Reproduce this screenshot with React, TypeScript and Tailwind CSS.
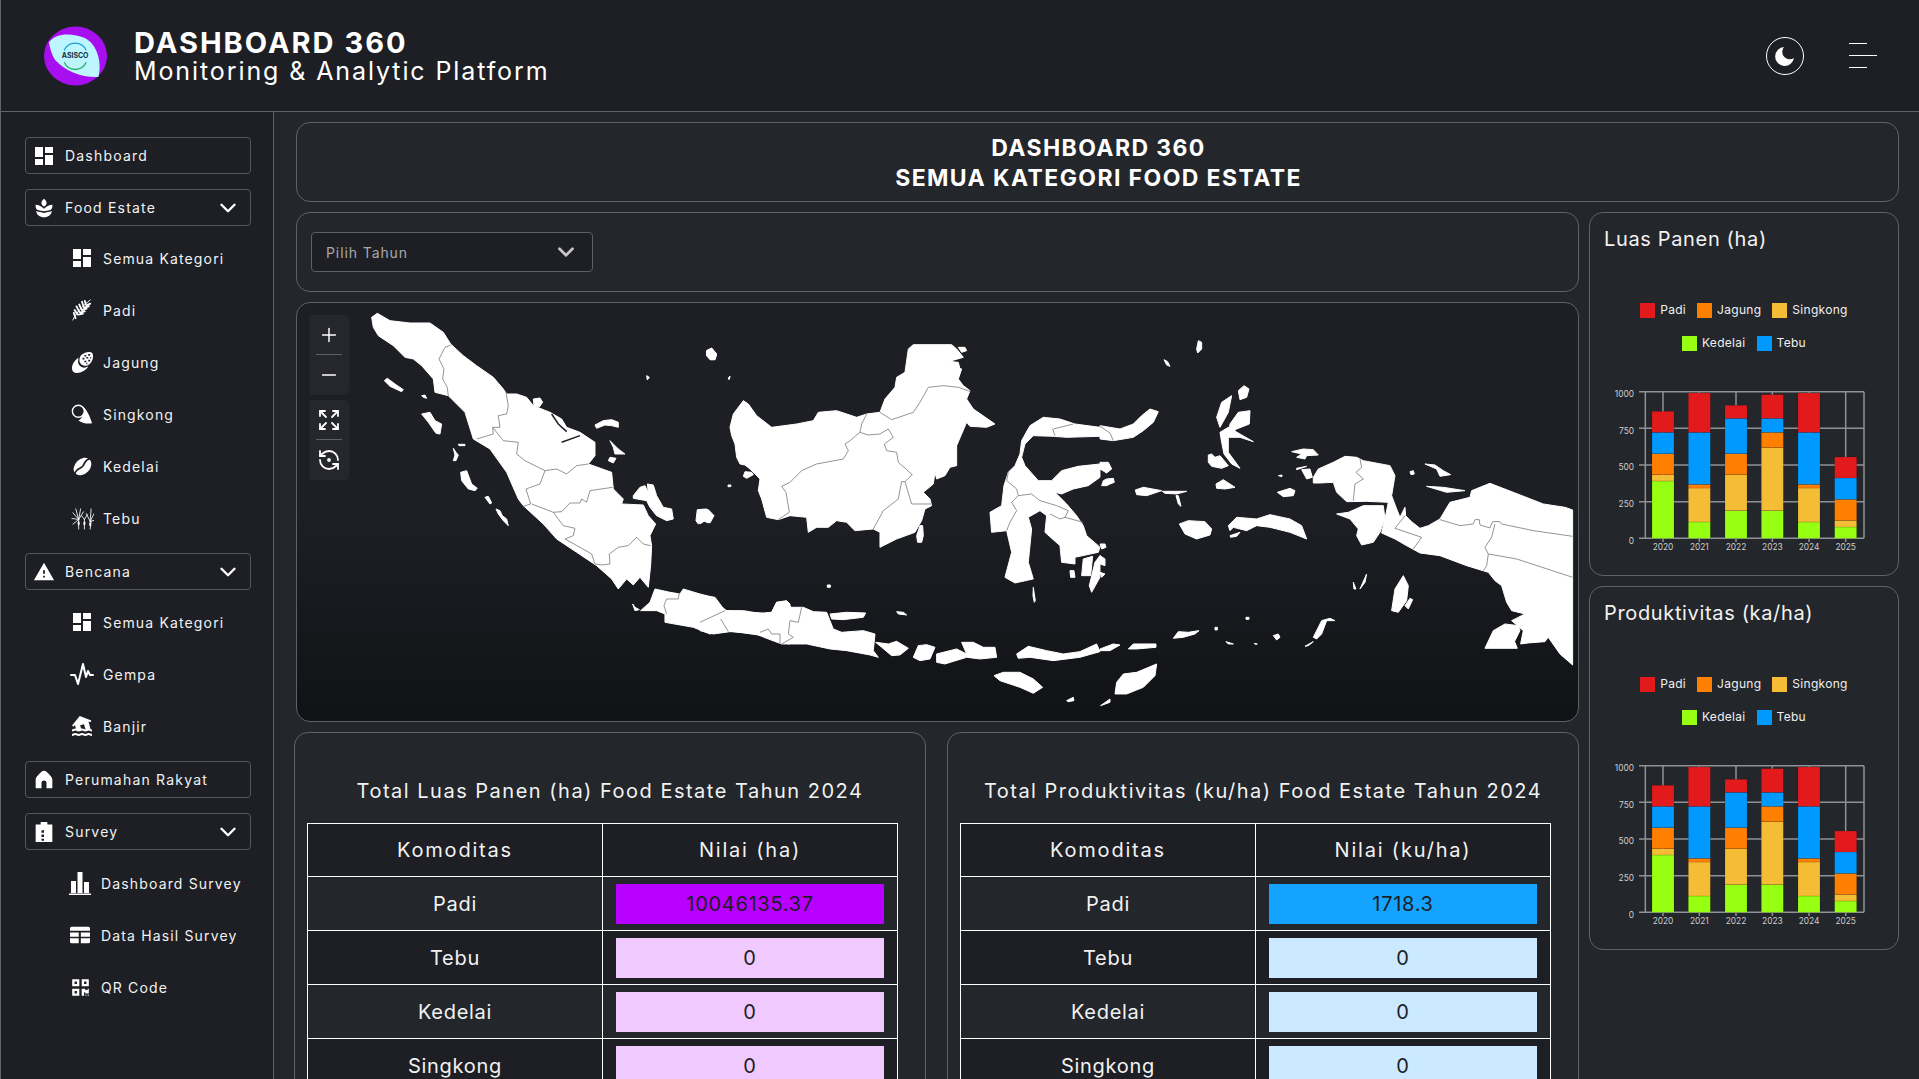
import React from 'react';
import { ChevronDown, Plus, Minus, Expand, RefreshCcwDot } from 'lucide-react';
import { MdWarning, MdFlood } from 'react-icons/md';
import { FaQrcode } from 'react-icons/fa';

/* sidebar icons */
const DashIcon = () => (
    <svg viewBox="3 3 18 18" className="w-[18px] h-[18px] fill-white"><path d="M3 13h8V3H3v10zm0 8h8v-6H3v6zm10 0h8V11h-8v10zm0-18v6h8V3h-8z" /></svg>
);
const SproutIcon = () => (
    <svg viewBox="0 0 24 24" className="w-[20px] h-[20px] fill-white">
        <path d="M12 1c2.400 2 3.400 4 3 6-.5 1.500-1.700 2.600-3 3.500-1.300-.9-2.500-2-3-3.500-.4-2 .6-4 3-6z" />
        <path d="M2 8c3.500.3 6.500 1.500 10 5 3.500-3.500 6.500-4.700 10-5 .5 3-.5 5-2.500 6.500-2.500 1-5.500 1-7.500 1.500-2-.5-5-.5-7.500-1.500C2.500 13 1.500 11 2 8z" />
        <path d="M2.500 15.500c3 1.500 6.500 1 9.500 2.500 3-1.500 6.500-1 9.500-2.500-.5 4.500-4.500 7.500-9.500 7.500s-9-3-9.500-7.500z" />
    </svg>
);
const PadiIcon = () => (
    <svg viewBox="0 0 24 24" className="w-[22px] h-[22px] stroke-white" fill="none" strokeWidth="1" strokeLinecap="round">
        <path d="M2 23C5 16 10 10 21 1" />
        <path d="M5 21l-2-6M7 17l-3-5M9 14l-3-6M11.500 11.500L9 6M14 9l-2-6M16.500 6.500L15 2M8 17l5-1M10 14.500l5-1M12 12l5-1.500M14.500 9.500l5-1.500M17 7l4-2" strokeWidth="2" />
    </svg>
);
const JagungIcon = () => (
    <svg viewBox="0 0 24 24" className="w-[23px] h-[23px]">
        <path d="M11 4c3-3 9-4 11-2s1 8-2 11c-2 2-5 3-7 2-3-1-5-4-4-7 .2-1.500 1-3 2-4z" fill="white" />
        <path d="M14 5h2M18 4h2M12 8h2M16 7h2M20 7h1M14 11h2M18 10h2M16 13h1" stroke="#1d1f24" strokeWidth="1.700" />
        <path d="M8 7c-4 2-7 7-7 11 0 3 2 5 5 5 5 0 10-3 12-7-3 2-6 2-8 0-3-2-3-6-2-9z" fill="white" />
    </svg>
);
const SingkongIcon = () => (
    <svg viewBox="0 0 24 24" className="w-[22px] h-[22px]">
        <path d="M10 3c5 .5 9 7 13 19-5 1-11 0-15-3 3-.5 8-7 2-16z" fill="white" />
        <circle cx="8" cy="9" r="6.500" fill="#1d1f24" stroke="white" strokeWidth="1.500" />
    </svg>
);
const KedelaiIcon = () => (
    <svg viewBox="0 0 24 24" className="w-[21px] h-[21px]">
        <ellipse cx="12" cy="12" rx="8.500" ry="11.500" transform="rotate(45 12 12)" fill="white" />
        <path d="M21 3C14 4 15 9 12 12s-8 3-9 9" fill="none" stroke="#1d1f24" strokeWidth="2" />
    </svg>
);
const TebuIcon = () => (
    <svg viewBox="0 0 24 24" className="w-[23px] h-[23px] stroke-white" fill="none" strokeWidth="0.900" strokeLinecap="round">
        <path d="M8 23V13M14 23V13M20 23l1-8M8 13L2 6M8 13L5 2M8 13l2-11M8 13l5-8M8 13l-7-1M8 13l-6 5M14 13l-3-4M14 13l3-5M20 15l1-13M20 15l-4-8M20 15l4-8M20 15l4-1" />
        <path d="M8 16v2M14 16v2M20 17v2" strokeWidth="2" />
    </svg>
);
const GempaIcon = () => (
    <svg viewBox="0 0 24 24" className="w-[24px] h-[24px] stroke-white" fill="none" strokeWidth="2" strokeLinejoin="round" strokeLinecap="round">
        <path d="M1 13h4l3 9 5-20 3 13 2-6 2 4h3" />
    </svg>
);
const BanjirIcon = () => <MdFlood className="w-[24px] h-[24px] text-white" />;
const WarnIcon = () => <MdWarning className="w-[24px] h-[24px] text-white" />;
const HomeIcon = () => (
    <svg viewBox="0 0 24 24" className="w-[20px] h-[20px] fill-white"><path d="M12 1c1.500 0 3 1 5 3s5 5 5 7v11h-7v-7c0-1.500-1.500-2.500-3-2.500S9 13.500 9 15v7H2V11c0-2 3-5 5-7s3.500-3 5-3z" /></svg>
);
const SurveyIcon = () => (
    <svg viewBox="0 0 24 24" className="w-[20px] h-[20px]">
        <path d="M8 0h8v3h6v21H2V3h6z" fill="white" />
        <path d="M9 10h3v3H9zM9 15h3v3H9zM9 20h3v2.500H9z" fill="#1d1f24" />
    </svg>
);
const BarsIcon = () => (
    <svg viewBox="0 0 24 24" className="w-[24px] h-[24px] fill-white"><path d="M3 10h5v12H3zM9.500 1h5v21h-5zM16 11h5v11h-5zM1 22.500h22V24H1z" /></svg>
);
const TableIcon = () => (
    <svg viewBox="0 0 24 24" className="w-[20px] h-[20px] fill-white"><path d="M2 2h20a2 2 0 0 1 2 2v3H0V4a2 2 0 0 1 2-2zM0 9h10.500v5H0zM13 9h11v5H13zM0 16h10.500v6H2a2 2 0 0 1-2-2zM13 16h11v4a2 2 0 0 1-2 2h-9z" /></svg>
);
const QrIcon = () => <FaQrcode className="w-[19px] h-[19px] text-white" />;

const menu = [
    { label: 'Dashboard', icon: DashIcon },
    {
        label: 'Food Estate', icon: SproutIcon, pad: 'pl-[45px]', list: 'mb-[9px]', sub: [
            { label: 'Semua Kategori', icon: DashIcon },
            { label: 'Padi', icon: PadiIcon },
            { label: 'Jagung', icon: JagungIcon },
            { label: 'Singkong', icon: SingkongIcon },
            { label: 'Kedelai', icon: KedelaiIcon },
            { label: 'Tebu', icon: TebuIcon },
        ],
    },
    {
        label: 'Bencana', icon: WarnIcon, pad: 'pl-[45px]', list: 'mb-[9px]', sub: [
            { label: 'Semua Kategori', icon: DashIcon },
            { label: 'Gempa', icon: GempaIcon },
            { label: 'Banjir', icon: BanjirIcon },
        ],
    },
    { label: 'Perumahan Rakyat', icon: HomeIcon },
    {
        label: 'Survey', icon: SurveyIcon, pad: 'pl-[43px]', list: 'pt-px', sub: [
            { label: 'Dashboard Survey', icon: BarsIcon },
            { label: 'Data Hasil Survey', icon: TableIcon },
            { label: 'QR Code', icon: QrIcon },
        ],
    },
];

const Sidebar = () => (
    <aside className="w-[273px] shrink-0 bg-[#1d1f24] border-r border-[#606266] pl-[24px] pr-[22px] pt-[25px]">
        {menu.map((item) => {
            const Icon = item.icon;
            return (
                <div key={item.label}>
                    <div className={`h-[37px] flex items-center border border-[#55575b] rounded-[4px] pl-[7px] pr-[9px] ${item.sub ? 'mb-[6px]' : 'mb-[15px]'}`}>
                        <div className="w-[22px] flex justify-center"><Icon /></div>
                        <span className="ml-[10px] flex-1 text-[14px] tracking-[1.2px] text-[#f2f2f2]">{item.label}</span>
                        {item.sub && <ChevronDown className="w-[26px] h-[26px] text-white" strokeWidth={2.2} />}
                    </div>
                    {item.sub && (
                        <div className={item.list}>
                            {item.sub.map((s) => {
                                const SubIcon = s.icon;
                                return (
                                    <div key={s.label} className={`h-[52px] flex items-center ${item.pad}`}>
                                        <div className="w-[24px] flex justify-center"><SubIcon /></div>
                                        <span className="ml-[9px] text-[14px] tracking-[1.15px] text-[#f2f2f2]">{s.label}</span>
                                    </div>
                                );
                            })}
                        </div>
                    )}
                </div>
            );
        })}
    </aside>
);

const Logo = () => (
    <svg viewBox="132 80 190 178" className="w-[63px] h-[60px]">
        <ellipse cx="227" cy="169" rx="95" ry="89" fill="#a80ff0" />
        <path d="M147 128C165 100 215 98 255 115 290 132 308 185 296 232 250 235 195 215 165 180 155 165 150 145 147 128z" fill="#bdf6ff" />
        <path d="M193 152A36 36 0 0 1 259 152" fill="none" stroke="#1f9fd6" strokeWidth="4" />
        <path d="M259 188A36 36 0 0 1 193 188" fill="none" stroke="#2fae6a" strokeWidth="4" />
        <text x="226" y="176" textAnchor="middle" fontSize="21" fontWeight="700" fill="#12323f">ASISCO</text>
    </svg>
);

const Header = () => (
    <header className="h-[112px] shrink-0 bg-[#1d1f24] border-b border-[#606266] flex items-center pl-[43px] pr-[42px]">
        <Logo />
        <div className="ml-[27px] text-white">
            <div className="text-[29px] leading-[30px] font-bold tracking-[2px]">DASHBOARD 360</div>
            <div className="text-[25px] leading-[26px] tracking-[1.9px]">Monitoring &amp; Analytic Platform</div>
        </div>
        <div className="ml-auto flex items-center gap-[45px]">
            <div className="w-[38px] h-[38px] rounded-full border border-white flex items-center justify-center">
                <svg viewBox="0 0 24 24" className="w-[24px] h-[24px] fill-white"><path d="M11 3A9.500 9.500 0 1 0 21 14 7.500 7.500 0 0 1 11 3z" /></svg>
            </div>
            <div className="w-[28px] flex flex-col gap-[10.500px]">
                <div className="h-[1.500px] w-[18px] bg-white" />
                <div className="h-[1.500px] w-[28px] bg-white" />
                <div className="h-[1.500px] w-[18px] bg-white" />
            </div>
        </div>
    </header>
);

/* map shapes, traced in the coordinates of three crops of the map */
const sumatra = [
    '245,55 262,43 300,65 360,72 420,72 460,100 482,135 520,170 560,200 610,235 640,270 650,285 680,285 710,295 730,320 780,340 815,360 830,385 870,400 915,430 915,470 895,495 965,520 970,570 1000,600 995,615 1060,618 1075,650 1097,675 1080,710 1085,740 1082,800 1075,865 1050,835 1030,858 1010,840 985,870 965,840 920,800 860,760 800,720 760,675 700,620 685,600 650,520 600,450 550,420 525,340 475,290 435,280 430,240 395,200 370,180 345,175 310,140 265,110 250,85',
    '283,245 292,238 315,255 340,272 335,278 300,262',
    '395,290 405,288 410,298 400,295',
    '395,345 420,340 435,365 455,375 450,405 438,403 415,370',
    '490,448 498,460 505,468 498,485 490,485 495,468',
    '505,436 525,436 525,440 507,440',
    '512,520 530,515 545,555 562,568 555,575 535,570 515,545',
    '585,595 595,592 605,612 600,615',
    '618,630 630,635 637,650 650,660 655,680 640,665 625,645',
    '1030,590 1050,565 1065,560 1075,580 1072,555 1090,558 1100,590 1120,625 1145,630 1150,660 1130,665 1100,650 1080,625 1070,605 1030,598',
    '1222,632 1250,630 1270,650 1255,672 1240,665 1225,675 1218,665',
    '730,300 750,297 758,310 748,324 732,320',
    '915,378 940,365 965,362 985,370 985,385 965,380 945,378 920,388',
    '960,425 985,450 1005,465 975,465 970,445',
    '960,475 978,478 970,492 955,485',
    '1250,155 1265,148 1280,165 1275,182 1262,182 1250,170',
    '1070,230 1078,235 1072,243',
    '1315,238 1320,232 1318,240',
    '1052,935 1080,910 1095,870 1140,880 1170,885 1180,870 1230,885 1270,895 1290,920 1310,935 1360,940 1420,942 1445,940 1460,910 1490,905 1500,915 1500,1035 1470,1030 1420,1010 1310,995 1260,1005 1210,985 1125,970 1125,945 1100,935',
    '1028,915 1035,925 1048,932 1035,935',
];
const sumatraLines = 'M482,138 L465,145 L447,180 L462,210 L458,240 L472,265 L475,292 M648,280 L655,320 L650,345 L625,350 L630,385 L608,385 L610,405 L560,420 M608,385 L640,425 L685,430 L680,465 L705,485 L765,515 L800,510 L830,525 L860,500 L895,495 M765,515 L750,555 L708,570 L722,615 L700,622 M968,565 L900,575 L890,610 L875,600 L870,612 L840,612 L815,638 L790,640 L725,615 M790,640 L820,680 L855,688 L850,710 L825,720 L870,745 L905,765 L915,795 L935,798 L960,795 L958,765 L985,745 L1015,740 L1040,715 L1060,735 L1082,740 M1168,882 L1165,900 L1130,900 L1122,920 L1130,945 M1310,935 L1295,960 L1310,995 M1445,990 L1415,1000 M1445,990 L1465,1000 L1470,1030 M1490,1030 L1500,1020';
const sumatraCuts = 'M785,345 L805,375 L830,398 M815,430 L870,410';

const central = [
    '90,295 100,255 130,215 145,225 170,260 215,295 290,285 340,275 355,250 410,245 470,265 500,255 540,250 555,210 585,175 590,145 615,130 625,60 640,47 755,47 770,60 790,85 755,95 770,115 785,120 775,150 790,170 810,185 800,210 820,240 885,285 860,295 810,292 800,280 785,315 770,350 770,410 750,415 735,440 710,450 705,430 700,465 670,490 690,510 695,530 675,540 665,575 645,610 590,630 540,655 540,610 520,600 465,605 440,580 410,575 385,595 350,595 325,610 320,565 270,560 235,572 200,565 185,510 175,485 180,450 150,420 135,408 120,405 110,385 105,345 95,320',
    '135,428 155,430 160,437 140,448 130,442',
    '660,590 668,590 670,620 665,640 653,640 650,620',
    '775,55 795,55 800,65 785,70',
    '745,97 775,100 780,120 760,118',
    '20,65 35,57 50,75 45,92 30,92 20,80',
    '85,147 90,143 87,152',
    '84,468 93,468 92,473 84,473',
    '0,542 25,542 42,560 30,582 15,575 0,585',
    '382,768 391,768 391,775 382,775',
    '0,800 45,805 60,825 75,845 130,845 190,855 215,850 230,820 255,818 275,835 310,835 340,848 380,850 390,875 400,900 425,910 490,905 525,915 520,965 535,985 510,978 440,965 390,960 320,945 245,945 205,930 160,912 90,908 40,915 0,905',
    '390,855 440,850 497,852 490,865 430,872 395,870',
    '590,848 610,850 620,858 595,855',
    '527,940 565,945 590,937 625,958 600,978 575,980 545,955',
    '655,950 680,947 705,955 690,990 660,995 640,985',
    '710,975 770,960 800,975 785,940 820,940 850,955 885,955 890,985 840,990 800,985 735,1005 710,1000',
    '950,975 985,952 1040,965 1090,975 1140,968 1190,945 1200,968 1140,985 1060,995 990,985 955,988',
    '882,1040 910,1030 960,1030 1000,1050 1028,1075 1000,1093 960,1075 900,1055',
    '1100,1115 1120,1105 1122,1115 1105,1118',
    '870,550 905,530 912,470 925,430 945,410 960,375 965,335 990,290 1030,265 1080,270 1125,285 1200,295 1200,322 1100,325 1060,322 1000,320 975,345 965,385 975,410 1015,455 1055,455 1085,425 1135,412 1200,405 1200,445 1165,470 1120,480 1085,495 1065,490 1100,525 1130,560 1150,590 1160,620 1195,650 1200,655 1195,670 1125,685 1125,705 1085,700 1080,650 1035,610 1040,560 1020,545 985,565 995,600 985,700 1000,750 945,762 915,745 935,670 920,605 875,610',
    '1150,690 1178,682 1172,740 1145,740',
    '1110,725 1122,725 1125,745 1112,745',
    '1185,700 1200,680 1200,745 1175,790 1168,770',
    '1000,775 1006,815 1003,820 999,800',
];
const centralLines = 'M500,255 L485,285 L480,310 L450,335 L435,345 L445,365 L430,390 L350,405 L305,425 L270,460 L245,472 L258,490 L268,550 L235,572 M480,310 L505,318 L540,315 L565,300 L580,325 L553,345 L560,365 L590,370 L595,400 L637,437 L615,458 L605,458 L595,510 L550,545 L520,600 M540,250 L575,272 L640,250 L660,220 L685,175 L730,170 L775,175 L810,187 M615,458 L635,525 L695,525 M925,430 L920,455 L950,480 L955,500 L935,520 L950,545 L930,580 L920,605 M955,500 L995,495 L1020,515 L1070,530 L1105,545 L1095,565 L1150,580 M1050,555 L1080,570 L1095,565 M1060,300 L1120,285 M1058,300 L1065,320 M0,880 L75,845 M62,870 L85,908 M180,910 L205,900 L215,915 L240,915 L240,945 M270,875 L265,915 L280,925 L245,945 M270,875 L295,880 L305,835';

const eastern = [
    '0,290 60,300 100,285 125,260 150,240 175,248 160,280 130,305 100,325 40,335 0,330',
    '0,400 25,400 35,420 20,432 0,420',
    '20,450 40,448 43,460 30,465 20,470 5,470 10,455',
    '0,645 15,645 18,655 5,660',
    '0,680 15,690 15,710 0,705',
    '0,730 15,735 5,745',
    '295,35 305,40 305,60 293,72 290,60',
    '192,92 203,98 210,112 200,108',
    '415,185 432,170 447,180 440,205 420,212',
    '350,265 365,220 395,200 385,250 360,295',
    '390,285 415,250 450,245 448,285 410,300 385,320',
    '360,310 385,295 420,315 460,338 420,325 385,325 385,370 420,418 395,405 372,375 365,340',
    '325,378 335,375 345,385 360,380 385,410 365,418 335,412 325,400',
    '348,465 370,452 405,475 375,480 350,478',
    '106,483 130,475 185,485 140,500 110,497',
    '187,487 260,487 230,495 195,493',
    '228,500 235,500 243,532 235,525',
    '238,585 265,575 315,578 335,600 330,618 290,630 255,615',
    '385,590 410,565 470,570 510,557 570,570 605,590 620,630 570,610 510,595 470,590 440,605 400,595 390,605',
    '390,620 420,610 410,622 392,625',
    '875,845 885,780 910,740 925,770 920,815 895,850',
    '915,830 930,808 938,812 925,840',
    '760,760 768,780 762,780',
    '780,780 800,735 795,760',
    '640,925 665,875 690,868 705,875 680,875 665,915 650,930',
    '615,952 640,938 625,950',
    '220,928 235,908 265,910 297,905 285,915 250,925',
    '520,920 535,915 540,925 530,933',
    '378,938 400,945 385,945',
    '438,865 447,865 447,871 438,871',
    '345,895 352,895 352,903 345,903',
    '463,943 472,945 465,946',
    '532,490 570,478 585,485 580,500 550,503',
    '575,368 610,360 640,362 655,378 620,380 615,390 590,385 605,375',
    '605,422 630,420 637,445 620,450',
    '590,418 620,412 590,422',
    '535,440 546,438 546,443',
    '975,405 1005,408 1030,425 1052,437 1020,442 1010,420',
    '980,472 1030,475 1095,485 1040,490',
    '930,428 940,425 943,435 933,437',
    '0,960 40,945 60,948 30,965 0,965',
    '85,960 100,945 110,945 168,945 168,955 110,960',
    '50,1060 70,1035 110,1030 170,1005 165,1040 130,1075 80,1095 45,1095',
    '30,1120 2,1130 30,1110',
    '640,445 655,420 700,400 735,382 770,385 790,395 870,410 885,440 875,500 890,540 900,565 915,535 917,560 935,578 960,598 985,590 1020,570 1050,520 1110,505 1115,485 1170,463 1240,490 1330,525 1395,535 1418,543 1418,1008 1380,975 1345,925 1335,938 1285,942 1262,945 1270,905 1235,875 1275,855 1235,845 1220,820 1205,770 1185,755 1165,730 1100,710 1020,680 960,672 920,650 885,630 845,612 855,570 865,520 800,517 740,518 710,490 700,460 660,462 640,462',
    '710,555 745,550 790,530 850,530 855,570 840,610 820,640 785,648 770,620 775,600 750,570',
    '1155,958 1180,905 1215,885 1255,890 1260,905 1240,945 1225,958',
    '1230,945 1245,940 1252,958 1225,958',
];
const easternLines = 'M1020,572 L1080,590 L1120,585 L1125,572 L1138,572 L1140,588 L1170,597 L1178,578 L1200,578 L1205,585 L1300,605 L1418,622 M1185,585 L1175,625 L1155,655 L1165,675 L1160,710 L1150,725 M1165,675 L1250,690 L1418,745 M780,390 L785,415 L768,430 L790,450 L765,465 L760,515 M915,560 L885,598 L965,625 L940,660 M0,292 L30,312 L40,335';

const Land = ({ transform, shapes, lines, cuts }: { transform: string; shapes: string[]; lines: string; cuts?: string }) => (
    <g transform={transform}>
        {shapes.map((points) => <polygon key={points} points={points} fill="white" stroke="white" strokeWidth="1" strokeLinejoin="round" vectorEffect="non-scaling-stroke" />)}
        {cuts && <path d={cuts} fill="none" stroke="#1d1f24" strokeWidth="1.5" vectorEffect="non-scaling-stroke" />}
        <path d={lines} fill="none" stroke="#77797c" strokeWidth="0.8" vectorEffect="non-scaling-stroke" />
    </g>
);

const MapPanel = () => (
    <div className="relative h-[420px] rounded-[14px] border border-[#5f6165] overflow-hidden bg-gradient-to-b from-[#1d1f24] from-50% to-[#111216]">
        <svg viewBox="297 304 1281 418" className="block w-full h-full">
            <Land transform="translate(290 300) scale(0.3333)" shapes={sumatra} lines={sumatraLines} cuts={sumatraCuts} />
            <Land transform="translate(700 330) scale(0.3333)" shapes={central} lines={centralLines} />
            <Land transform="translate(1100 330) scale(0.3333)" shapes={eastern} lines={easternLines} />
        </svg>
        <div className="absolute left-[12px] top-[12px] flex flex-col gap-[5px]">
            <div className="w-[40px] h-[80px] rounded-[4px] bg-[#25272c] flex flex-col items-center text-white">
                <div className="h-[39px] flex items-center"><Plus className="w-[22px] h-[22px]" strokeWidth={1.6} /></div>
                <div className="w-[26px] h-px bg-[#5f6165]" />
                <div className="h-[40px] flex items-center"><Minus className="w-[22px] h-[22px]" strokeWidth={1.6} /></div>
            </div>
            <div className="w-[40px] h-[80px] rounded-[4px] bg-[#25272c] flex flex-col items-center text-white">
                <div className="h-[39px] flex items-center"><Expand className="w-[24px] h-[24px]" strokeWidth={1.8} /></div>
                <div className="w-[26px] h-px bg-[#5f6165]" />
                <div className="h-[40px] flex items-center"><RefreshCcwDot className="w-[24px] h-[24px]" strokeWidth={1.8} /></div>
            </div>
        </div>
    </div>
);

/* stacked bars: tops of each segment, from the bottom one up */
const colors = ['#96ff12', '#f5bd36', '#ff8000', '#0099ff', '#e31a1c'];
const bars = [
    { year: '2020', x: 249, tops: [845, 826, 763, 699, 636] },
    { year: '2021', x: 358, tops: [968, 866, 855, 699, 581] },
    { year: '2022', x: 468, tops: [934, 826, 763, 657, 618] },
    { year: '2023', x: 577, tops: [934, 745, 699, 657, 586] },
    { year: '2024', x: 687, tops: [968, 866, 855, 699, 581] },
    { year: '2025', x: 797, tops: [983, 963, 900, 836, 773] },
];
const ticks = [
    { label: '1000', y: 577 },
    { label: '750', y: 687 },
    { label: '500', y: 797 },
    { label: '250', y: 907 },
    { label: '0', y: 1017 },
];
const legendRows = [
    [{ name: 'Padi', color: '#e31a1c' }, { name: 'Jagung', color: '#ff8000' }, { name: 'Singkong', color: '#f5bd36' }],
    [{ name: 'Kedelai', color: '#96ff12' }, { name: 'Tebu', color: '#0099ff' }],
];

const ChartPanel = ({ title }: { title: string }) => (
    <div className="h-[364px] rounded-[14px] border border-[#5f6165] pt-[14px]">
        <div className="pl-[14px] text-[20px] leading-[24px] tracking-[0.65px] text-[#f2f2f2]">{title}</div>
        <div className="mt-[49px] flex flex-col gap-[13px]">
            {legendRows.map((row, i) => (
                <div key={i} className="h-[20px] flex justify-center items-center gap-[11px]">
                    {row.map((l) => (
                        <div key={l.name} className="flex items-center gap-[5px]">
                            <div className="w-[15px] h-[15px]" style={{ backgroundColor: l.color }} />
                            <span className="text-[12px] tracking-[0.3px] text-[#f0f0f0]">{l.name}</span>
                        </div>
                    ))}
                </div>
            ))}
        </div>
        <svg viewBox="90 560 810 510" className="block mt-[33px] ml-[20px] w-[270px] h-[170px]">
            {ticks.map((t) => (
                <g key={t.label}>
                    <line x1="177" x2="852" y1={t.y} y2={t.y} stroke="#909295" strokeWidth="4.500" />
                    <text x="162" y={t.y + 16} textAnchor="end" fontSize="25" fill="#cfcfcf">{t.label}</text>
                </g>
            ))}
            <line x1="196" x2="196" y1="577" y2="1017" stroke="#909295" strokeWidth="4.500" />
            <line x1="852" x2="852" y1="577" y2="1017" stroke="#909295" strokeWidth="4.500" />
            {bars.map((b) => (
                <g key={b.year}>
                    <line x1={b.x} x2={b.x} y1="577" y2="1028" stroke="#909295" strokeWidth="4.500" />
                    {b.tops.map((top, i) => {
                        const bottom = i === 0 ? 1017 : b.tops[i - 1];
                        return <rect key={i} x={b.x - 33} y={top} width="66" height={bottom - top} fill={colors[i]} stroke="rgba(0,0,0,0.18)" strokeWidth="2" />;
                    })}
                    <text x={b.x} y="1053" textAnchor="middle" fontSize="25" fill="#cfcfcf">{b.year}</text>
                </g>
            ))}
        </svg>
    </div>
);

const ValueTable = ({ title, unit, rows, strong, light, className }: { title: string; unit: string; rows: { name: string; value: string }[]; strong: string; light: string; className: string }) => (
    <div className={`h-[400px] rounded-[14px] border border-[#5f6165] ${className}`}>
        <div className="mt-[43px] h-[30px] leading-[30px] text-center text-[20px] tracking-[1.5px] text-[#f2f2f2]">{title}</div>
        <table className="mt-[17px] ml-[12px] w-[591px] table-fixed border-collapse text-[20px] tracking-[0.7px] text-center text-[#f2f2f2]">
            <thead>
                <tr className="h-[53px] bg-[#1d1f24]">
                    <th className="border border-white font-normal tracking-[1.8px]">Komoditas</th>
                    <th className="border border-white font-normal tracking-[1.8px]">Nilai ({unit})</th>
                </tr>
            </thead>
            <tbody>
                {rows.map((row, i) => (
                    <tr key={row.name} className={`h-[54px] ${i % 2 === 1 ? 'bg-[#1d1f24]' : 'bg-[#23262b]'}`}>
                        <td className="border border-white">{row.name}</td>
                        <td className="border border-white px-[13px]">
                            <div className={`h-[40px] flex items-center justify-center text-[#1d1f24] ${i === 0 ? strong : light}`}>{row.value}</div>
                        </td>
                    </tr>
                ))}
            </tbody>
        </table>
    </div>
);

const luasRows = [
    { name: 'Padi', value: '10046135.37' },
    { name: 'Tebu', value: '0' },
    { name: 'Kedelai', value: '0' },
    { name: 'Singkong', value: '0' },
];
const produktivitasRows = [
    { name: 'Padi', value: '1718.3' },
    { name: 'Tebu', value: '0' },
    { name: 'Kedelai', value: '0' },
    { name: 'Singkong', value: '0' },
];

const App: React.FC = () => {
    return (
        <div className="h-[1079px] overflow-hidden flex flex-col bg-[#23262b] border-l border-[#606266] font-[Inter,sans-serif]">
            <Header />
            <div className="flex flex-1 min-h-0">
                <Sidebar />
                <main className="flex-1 min-w-0 pl-[22px] pt-[10px]">
                    {/* Page title */}
                    <div className="w-[1603px] h-[80px] rounded-[14px] border border-[#5f6165] flex flex-col items-center justify-center pt-[2px] pl-[2px] text-white font-bold text-[23px] leading-[30px] tracking-[1.4px]">
                        <div>DASHBOARD 360</div>
                        <div>SEMUA KATEGORI FOOD ESTATE</div>
                    </div>
                    <div className="mt-[10px] flex gap-[10px]">
                        <div className="w-[1283px] shrink-0">
                            {/* Year filter */}
                            <div className="h-[80px] rounded-[14px] border border-[#5f6165] flex items-center px-[14px]">
                                <div className="w-[282px] h-[40px] rounded-[4px] border border-[#5f6165] bg-[#1d1f24] flex items-center justify-between pl-[14px] pr-[13px]">
                                    <span className="text-[14px] tracking-[0.9px] text-[#a8a9ab]">Pilih Tahun</span>
                                    <ChevronDown className="w-[26px] h-[26px] text-[#c4c4c4]" strokeWidth={2.6} />
                                </div>
                            </div>
                            <div className="mt-[10px]"><MapPanel /></div>
                            <div className="mt-[10px] -ml-[2px] flex gap-[21px]">
                                <ValueTable className="w-[632px]" title="Total Luas Panen (ha) Food Estate Tahun 2024" unit="ha" rows={luasRows} strong="bg-[#b700ff]" light="bg-[#f0c9ff]" />
                                <ValueTable className="w-[632px]" title="Total Produktivitas (ku/ha) Food Estate Tahun 2024" unit="ku/ha" rows={produktivitasRows} strong="bg-[#14a3ff]" light="bg-[#cbe9ff]" />
                            </div>
                        </div>
                        <div className="w-[310px] shrink-0 flex flex-col gap-[10px]">
                            <ChartPanel title="Luas Panen (ha)" />
                            <ChartPanel title="Produktivitas (ka/ha)" />
                        </div>
                    </div>
                </main>
            </div>
        </div>
    );
};

export default App;
